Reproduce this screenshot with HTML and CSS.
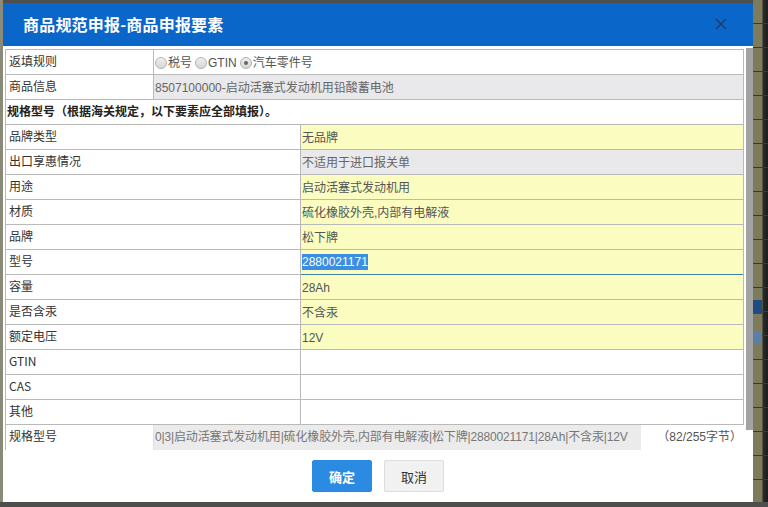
FILE: index.html
```html
<!DOCTYPE html>
<html lang="zh-CN">
<head>
<meta charset="utf-8">
<title>商品规范申报-商品申报要素</title>
<link rel="stylesheet" href="styles.css">
</head>
<body>
<div class="edge-left"></div>
<div class="modal">
  <div class="modal-head">
    <span class="modal-title">商品规范申报-商品申报要素</span>
    <svg class="close" width="14" height="14" viewBox="0 0 14 14"><path d="M2 2 L12 12 M12 2 L2 12" stroke="#1e3d6b" stroke-width="1.6" fill="none"/></svg>
  </div>
  <div class="modal-body">
    <div class="grid">
      <div class="row">
        <div class="lab narrow">返填规则</div>
        <div class="val plain radios">
          <span class="radio"></span><span>税号</span>
          <span class="radio gap"></span><span>GTIN</span>
          <span class="radio gap checked"></span><span>汽车零件号</span>
        </div>
      </div>
      <div class="row">
        <div class="lab narrow">商品信息</div>
        <div class="val gray">8507100000-启动活塞式发动机用铅酸蓄电池</div>
      </div>
      <div class="row heading">规格型号（根据海关规定，以下要素应全部填报）。</div>
      <div class="row"><div class="lab">品牌类型</div><div class="val yellow">无品牌</div></div>
      <div class="row"><div class="lab">出口享惠情况</div><div class="val gray">不适用于进口报关单</div></div>
      <div class="row"><div class="lab">用途</div><div class="val yellow">启动活塞式发动机用</div></div>
      <div class="row"><div class="lab">材质</div><div class="val yellow">硫化橡胶外壳,内部有电解液</div></div>
      <div class="row"><div class="lab">品牌</div><div class="val yellow">松下牌</div></div>
      <div class="row"><div class="lab">型号</div><div class="val yellow focus"><span class="sel">2880021171</span></div></div>
      <div class="row"><div class="lab">容量</div><div class="val yellow">28Ah</div></div>
      <div class="row"><div class="lab">是否含汞</div><div class="val yellow">不含汞</div></div>
      <div class="row"><div class="lab">额定电压</div><div class="val yellow">12V</div></div>
      <div class="row"><div class="lab">GTIN</div><div class="val plain"></div></div>
      <div class="row"><div class="lab">CAS</div><div class="val plain"></div></div>
      <div class="row"><div class="lab">其他</div><div class="val plain"></div></div>
      <div class="row last">
        <div class="lab narrow noborder">规格型号</div>
        <div class="spec">0|3|启动活塞式发动机用|硫化橡胶外壳,内部有电解液|松下牌|2880021171|28Ah|不含汞|12V</div>
        <div class="count">（82/255字节）</div>
      </div>
    </div>
    <div class="scrollbar"></div>
  </div>
  <div class="actions">
    <button class="btn primary">确定</button>
    <button class="btn">取消</button>
  </div>
</div>
<div class="edge-right">
  <div class="bg-line"></div>
  <div class="bg-blue one"></div>
  <div class="bg-blue two"></div>
</div>
</body>
</html>
```

FILE: styles.css
```css
html, body {
  margin: 0;
  padding: 0;
}
body {
  width: 768px;
  height: 507px;
  overflow: hidden;
  display: flex;
  align-items: flex-start;
  background: #4e4e4c;
  font-family: "Liberation Sans", "Noto Sans CJK SC", sans-serif;
  font-size: 12px;
  color: #333;
}
.edge-left {
  width: 3px;
  height: 502px;
  background: #8a8a78;
}
.modal {
  margin-top: 3px;
  width: 750px;
  height: 499px;
  background: #fff;
  display: flex;
  flex-direction: column;
}
.modal-head {
  height: 43px;
  background: #0b66c9;
  display: flex;
  align-items: center;
  justify-content: space-between;
  padding: 0 25px 0 20px;
  flex-shrink: 0;
}
.modal-title {
  color: #fff;
  font-family: "Noto Sans CJK SC", sans-serif;
  font-weight: 700;
  font-size: 16px;
  letter-spacing: 0.2px;
  margin-top: -2px;
}
.close {
  display: block;
  margin-top: -2px;
}
.modal-body {
  display: flex;
  align-items: flex-start;
  padding: 2px 0 0 2px;
}
.grid {
  width: 739px;
  margin-top: 1px;
  border-top: 1px solid #b9b9b9;
  border-left: 1px solid #b9b9b9;
}
.row {
  display: flex;
  height: 24px;
  border-bottom: 1px solid #b9b9b9;
  border-right: 1px solid #b9b9b9;
}
.lab {
  width: 291px;
  flex-shrink: 0;
  border-right: 1px solid #b9b9b9;
  padding-left: 3px;
  line-height: 22px;
  color: #333;
  font-family: "Noto Sans CJK SC", sans-serif;
}
.lab.narrow {
  width: 144px;
}
.lab.noborder {
  border-right: 1px solid #e0e0e0;
}
.val {
  flex: 1;
  padding: 2px 0 0 1px;
  line-height: 22px;
  color: #555;
  white-space: nowrap;
  overflow: hidden;
}
.val.yellow { background: #fafcc0; }
.val.gray { background: #e9e8ea; color: #666; }
.val.plain { background: #fff; }
.val.focus {
  border-bottom: 2px solid #3d7fae;
  height: 22px;
  line-height: 20px;
}
.sel {
  background: #3a8ee3;
  color: #fff;
  padding: 1px 0;
}
.radios {
  display: flex;
  align-items: center;
  padding-top: 2px;
  color: #555;
}
.radio {
  width: 10px;
  height: 10px;
  border-radius: 50%;
  border: 1px solid #b3b3b3;
  background: linear-gradient(#eee, #d6d6d6);
  margin-right: 1px;
  position: relative;
}
.radio.gap { margin-left: 3px; }
.radio.checked::after {
  content: "";
  position: absolute;
  left: 3px;
  top: 3px;
  width: 4px;
  height: 4px;
  border-radius: 50%;
  background: #666;
}
.row.heading {
  font-weight: 700;
  color: #222;
  padding-left: 1px;
  line-height: 22px;
  font-family: "Noto Sans CJK SC", sans-serif;
}
.row.last {
  border-bottom: none;
  border-right: none;
  height: 25px;
}
.spec {
  width: 486px;
  background: #ebebeb;
  color: #777;
  padding-left: 1px;
  line-height: 24px;
  white-space: nowrap;
  overflow: hidden;
  letter-spacing: -0.15px;
}
.count {
  flex: 1;
  text-align: right;
  padding-right: 2px;
  line-height: 24px;
  color: #555;
}
.scrollbar {
  width: 7px;
  height: 382px;
  margin-left: 2px;
  background: #a3a3a3;
}
.actions {
  display: flex;
  justify-content: center;
  gap: 12px;
  margin-top: 10px;
}
.btn {
  width: 60px;
  height: 32px;
  border: 1px solid #ddd;
  background: #f1f1f1;
  color: #333;
  font-family: "Noto Sans CJK SC", sans-serif;
  font-size: 13px;
  border-radius: 2px;
  padding: 0;
}
.btn.primary {
  background: #2b8be2;
  border-color: #2b8be2;
  color: #fff;
  font-weight: 700;
}
.edge-right {
  flex: 1;
  height: 502px;
  background: linear-gradient(90deg, #7d7b5c 0, #7d7b5c 9px, #2a2a28 10px, #1e1e1e 100%);
  background-image:
    repeating-linear-gradient(180deg, transparent 0, transparent 23px, #3a3a32 23px, #3a3a32 24px),
    linear-gradient(90deg, #7d7b5c 0, #7d7b5c 9px, #2a2a28 10px, #1e1e1e 100%);
  display: flex;
  flex-direction: column;
}
.bg-line { height: 300px; }
.bg-blue {
  width: 9px;
  background: #1f4b82;
}
.bg-blue.one { height: 14px; }
.bg-blue.two { height: 12px; margin-top: 18px; background: #5f7ea6; }
```
